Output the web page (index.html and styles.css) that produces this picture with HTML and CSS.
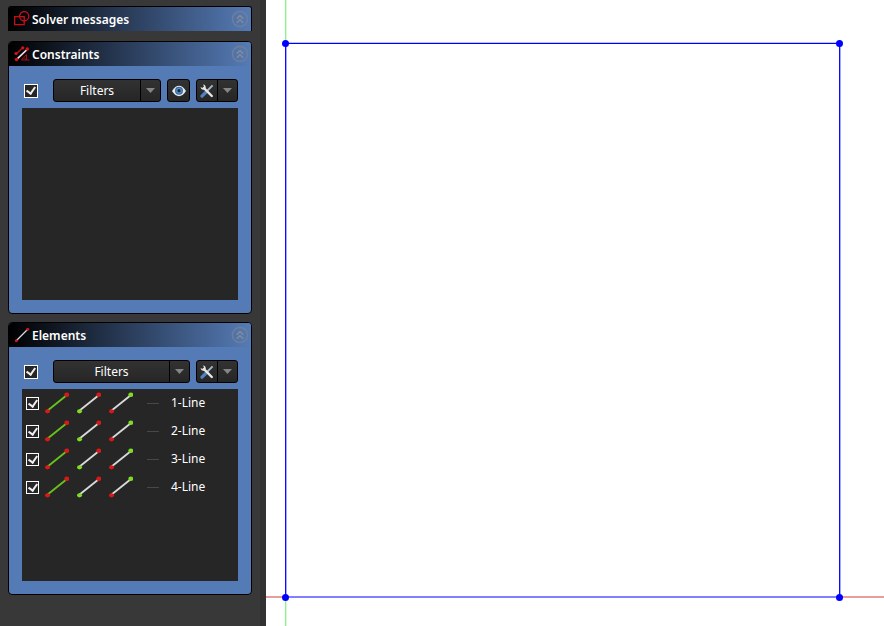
FILE: index.html
```html
<!DOCTYPE html>
<html lang="en">
<head>
<meta charset="utf-8">
<title>Sketcher</title>
<link rel="stylesheet" href="styles.css">
</head>
<body>
<svg class="defs" aria-hidden="true">
  <defs>
    <symbol id="collapse" viewBox="0 0 18 18">
      <g fill="none" stroke="#868b93" stroke-width="1.500">
        <circle cx="9" cy="9" r="7.600" stroke="#6f7f98"/>
        <path d="M5.800 8.600 9 5.600l3.200 3M5.800 12.800 9 9.800l3.200 3"/>
      </g>
    </symbol>
    <symbol id="tools" viewBox="0 0 14 14">
      <path d="M12.600 1.400 7 7" stroke="#a9bac9" stroke-width="1.800"/>
      <path d="M6.200 8 2 12.200" stroke="#4f83c0" stroke-width="3.200" stroke-linecap="round"/>
      <path d="M4 4.200 11.800 12" stroke="#e6e6e6" stroke-width="2.400" stroke-linecap="round"/>
      <path d="M3.100.600C4.900.700 6 2.200 5.700 4L4 5.700C2.200 6 .700 4.900.600 3.100L2.400 4 4 2.500Z" fill="#e6e6e6"/>
    </symbol>
    <symbol id="arrow" viewBox="0 0 9 5"><path d="M0 0h9L4.500 5Z" fill="#858585"/></symbol>
    <symbol id="edge" viewBox="0 0 24 22">
      <path d="M2 19 22 3" stroke="#68c41c" stroke-width="1.800"/>
      <ellipse cx="2.500" cy="19.300" rx="2.500" ry="2.100" fill="#dc1717"/><ellipse cx="21.800" cy="2.700" rx="2.500" ry="2.300" fill="#dc1717"/>
    </symbol>
    <symbol id="start" viewBox="0 0 24 22">
      <path d="M2 19 22 3" stroke="#dadada" stroke-width="1.800"/>
      <ellipse cx="2.500" cy="19.300" rx="2.500" ry="2.100" fill="#7ddd22"/><ellipse cx="21.800" cy="2.700" rx="2.500" ry="2.300" fill="#dc1717"/>
    </symbol>
    <symbol id="end" viewBox="0 0 24 22">
      <path d="M2 19 22 3" stroke="#dadada" stroke-width="1.800"/>
      <ellipse cx="2.500" cy="19.300" rx="2.500" ry="2.100" fill="#dc1717"/><ellipse cx="21.800" cy="2.700" rx="2.500" ry="2.300" fill="#7ddd22"/>
    </symbol>
  </defs>
</svg>
<div class="app">
  <aside class="sidebar">
    <section class="panel">
      <header class="panel-head">
        <svg class="head-icon" viewBox="0 0 16 16" fill="none" stroke="#c90f16" stroke-width="1.300"><path d="M.700 5.600h9.500v8H.700Z"/><circle cx="10.200" cy="5.200" r="4.600"/></svg>
        <h2>Solver messages</h2>
        <button class="collapse" aria-label="Collapse solver messages"><svg><use href="#collapse"/></svg></button>
      </header>
    </section>

    <section class="panel">
      <header class="panel-head">
        <svg class="head-icon" viewBox="0 0 16 16" fill="none">
          <path d="M2 8 9 1.500M3 13.500 13 4" stroke="#b81218" stroke-width="1.500"/>
          <path d="M3.500 12.500 12.500 4" stroke="#e8e8e8" stroke-width="1.600"/>
          <path d="M7.500 14 12.500 8.500V14ZM10 11.500l2.500 2.500h3" stroke="#a31117"/>
          <g fill="#d3161c"><circle cx="2" cy="7.500" r="1.600"/><circle cx="8.800" cy="1.800" r="1.600"/><circle cx="2.500" cy="13.500" r="1.700"/><circle cx="13.300" cy="3" r="1.700"/></g>
        </svg>
        <h2>Constraints</h2>
        <button class="collapse" aria-label="Collapse constraints"><svg><use href="#collapse"/></svg></button>
      </header>
      <div class="panel-body">
        <div class="toolbar">
          <input class="check" type="checkbox" checked aria-label="Enable constraint filter">
          <div class="split wide"><button class="main">Filters</button><button class="drop" aria-label="Choose constraint filters"><svg><use href="#arrow"/></svg></button></div>
          <button class="tool" aria-label="Show or hide listed constraints">
            <svg class="eye" viewBox="0 0 14 12"><path d="M0 6Q3.200.800 7 .800T14 6Q10.800 11.200 7 11.200T0 6Z" fill="#e7e9eb"/><circle cx="7" cy="5.700" r="4" fill="#376ca8"/><circle cx="7" cy="5.700" r="2.700" fill="#6095ce"/><circle cx="7" cy="5.700" r="1.700" fill="#202b38"/></svg>
          </button>
          <div class="split"><button class="main" aria-label="Constraint settings"><svg><use href="#tools"/></svg></button><button class="drop" aria-label="More constraint settings"><svg><use href="#arrow"/></svg></button></div>
        </div>
        <ul class="list"></ul>
      </div>
    </section>

    <section class="panel">
      <header class="panel-head">
        <svg class="head-icon" viewBox="0 0 16 16"><path d="M2 14 14 2" stroke="#dcdcdc" stroke-width="1.300"/><circle cx="2.300" cy="13.700" r="1.500" fill="#d3161c"/><circle cx="13.700" cy="2.300" r="1.500" fill="#d3161c"/></svg>
        <h2>Elements</h2>
        <button class="collapse" aria-label="Collapse elements"><svg><use href="#collapse"/></svg></button>
      </header>
      <div class="panel-body">
        <div class="toolbar">
          <input class="check" type="checkbox" checked aria-label="Enable element filter">
          <div class="split wide"><button class="main">Filters</button><button class="drop" aria-label="Choose element filters"><svg><use href="#arrow"/></svg></button></div>
          <div class="split"><button class="main" aria-label="Element settings"><svg><use href="#tools"/></svg></button><button class="drop" aria-label="More element settings"><svg><use href="#arrow"/></svg></button></div>
        </div>
        <ul class="list">
          <li><input class="check" type="checkbox" id="e1" checked><svg class="geo"><use href="#edge"/></svg><svg class="geo"><use href="#start"/></svg><svg class="geo"><use href="#end"/></svg><span class="dash"></span><label for="e1">1-Line</label></li>
          <li><input class="check" type="checkbox" id="e2" checked><svg class="geo"><use href="#edge"/></svg><svg class="geo"><use href="#start"/></svg><svg class="geo"><use href="#end"/></svg><span class="dash"></span><label for="e2">2-Line</label></li>
          <li><input class="check" type="checkbox" id="e3" checked><svg class="geo"><use href="#edge"/></svg><svg class="geo"><use href="#start"/></svg><svg class="geo"><use href="#end"/></svg><span class="dash"></span><label for="e3">3-Line</label></li>
          <li><input class="check" type="checkbox" id="e4" checked><svg class="geo"><use href="#edge"/></svg><svg class="geo"><use href="#start"/></svg><svg class="geo"><use href="#end"/></svg><span class="dash"></span><label for="e4">4-Line</label></li>
        </ul>
      </div>
    </section>
  </aside>
  <main class="canvas">
    <svg viewBox="0 0 618 626" preserveAspectRatio="xMinYMin meet" role="img" aria-label="Square sketch made of four lines">
      <path d="M19.700 0V43M19.700 598V626" stroke="#8af08a" stroke-width="1.300"/>
      <path d="M0 597H19M574 597H618" stroke="#cd3c3c" stroke-width="1"/>
      <path d="M19.700 43V597M573.700 43V597" stroke="#00f" stroke-width="1.300"/>
      <path d="M20 43.400H574M20 597H574" stroke="#00f" stroke-width="1.200"/>
      <g fill="#00f"><circle cx="19.500" cy="43.500" r="3.500"/><circle cx="573.500" cy="43.500" r="3.500"/><circle cx="19.500" cy="597.500" r="3.500"/><circle cx="573.500" cy="597.500" r="3.500"/></g>
    </svg>
  </main>
</div>
</body>
</html>
```
FILE: styles.css
```css
* { box-sizing: border-box; }
body {
  margin: 0;
  background: #fff;
  color: #fff;
  font: 12px/16px "Noto Sans", "Open Sans", sans-serif;
}
button { padding: 0; border: 0; background: none; color: inherit; font: inherit; }
svg { display: block; }
.defs { position: absolute; width: 0; height: 0; }

.app { display: flex; min-height: 100vh; }
.sidebar {
  flex: 0 0 266px;
  display: flex;
  flex-direction: column;
  gap: 8px;
  padding: 6px 8px;
  background: #383838;
  border-right: 6px solid #323232;
}
.panel {
  border: 1px solid #000;
  border-radius: 4px;
  background: #557bb6;
  overflow: hidden;
}
.panel:first-child { margin-bottom: 2px; border-bottom: 0; border-radius: 3px 3px 0 0; }
.panel-head {
  display: flex;
  align-items: center;
  gap: 2px;
  height: 24px;
  padding: 0 2px 0 5px;
  background: linear-gradient(to right, #000, #557bb6);
}
.head-icon { width: 16px; height: 16px; }
h2 { flex: 1; margin: 0; padding-top: 2px; font-size: 12px; font-weight: 600; }
.collapse svg { width: 18px; height: 18px; }

.panel-body { padding: 13px; }
.toolbar { display: flex; align-items: center; gap: 6px; margin-bottom: 6px; }
.toolbar .check { margin: 0 9px 0 2px; }

.check {
  appearance: none;
  flex: none;
  width: 14px;
  height: 14px;
  margin: 0;
  border: 1px solid #fff;
  background: #262626;
  display: grid;
  place-items: center;
}
.check:checked::after {
  content: "";
  width: 4px;
  height: 7px;
  margin-bottom: 2px;
  border: solid #eee;
  border-width: 0 2px 2px 0;
  transform: rotate(35deg);
}

.split, .tool {
  display: flex;
  height: 23px;
  border: 1px solid #000;
  border-radius: 3px;
  background: linear-gradient(#323232, #262626);
}
.split { width: 42px; }
.wide { flex: 1; }
.tool { width: 23px; align-items: center; justify-content: center; }
.eye { width: 14px; height: 12px; }
.main { flex: 1; display: grid; place-items: center; }
.main svg { width: 14px; height: 14px; }
.drop { width: 20px; border-left: 1px solid #000; display: grid; place-items: center; }
.drop svg { width: 9px; height: 5px; }

.list {
  height: 192px;
  margin: 0;
  padding: 0;
  list-style: none;
  background: #262626;
}
.list li {
  display: flex;
  align-items: center;
  gap: 8px;
  height: 28px;
  padding-left: 4px;
}
.list .check { width: 13px; height: 13px; margin-right: -2px; }
.geo { width: 24px; height: 22px; }
.dash { width: 12px; margin: 0 4px 0 6px; border-top: 1px solid #484848; }

.canvas { flex: 1; min-width: 0; }
.canvas svg { width: 100%; }
```
